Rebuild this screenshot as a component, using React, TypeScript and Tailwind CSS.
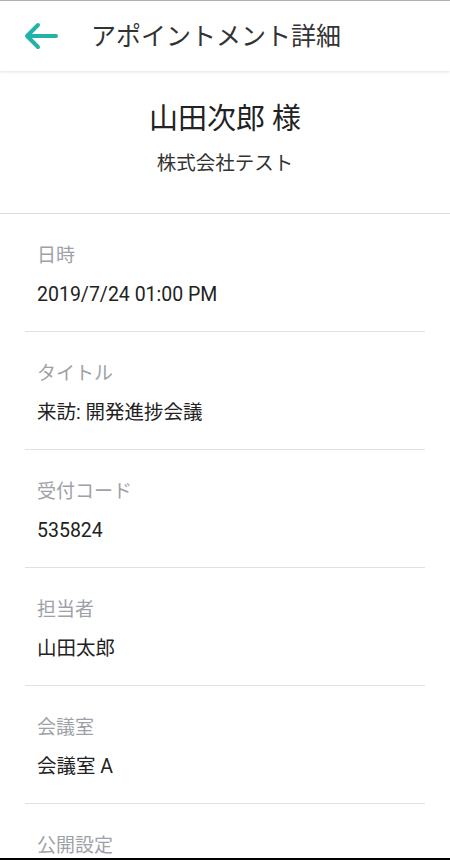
import React from "react";

const FONT = { fontFamily: 'Roboto, "Noto Sans CJK JP", sans-serif' };

const ITEMS: { label: string; value: string }[] = [
  { label: "日時", value: "2019/7/24 01:00 PM" },
  { label: "タイトル", value: "来訪: 開発進捗会議" },
  { label: "受付コード", value: "535824" },
  { label: "担当者", value: "山田太郎" },
  { label: "会議室", value: "会議室 A" },
  { label: "公開設定", value: "公開" },
];

function BackArrow() {
  return (
    <svg width="36" height="30" viewBox="0 0 36 30" fill="none">
      <path
        d="M4 15H33M15 4L4 15L15 26"
        stroke="#22b3a8"
        strokeWidth="4"
        strokeLinecap="round"
        strokeLinejoin="round"
      />
    </svg>
  );
}

export default function App() {
  return (
    <div className="relative h-[860px] w-[450px] overflow-hidden bg-white" style={FONT}>
      <div className="h-px bg-[#b5b5b5]" />
      <header className="relative z-10 flex h-[70px] items-center bg-white shadow-[0_1px_3px_rgba(0,0,0,0.12)]">
        <div className="ml-[23px] flex w-[40px] items-center">
          <BackArrow />
        </div>
        <h1 className="ml-[28px] text-[25px] leading-none text-[#333]">アポイントメント詳細</h1>
      </header>

      <section className="flex flex-col items-center border-b border-[#dcdcdc] pt-[30px] pb-[35px]">
        <div className="text-[29px] leading-[36px] text-[#222]">山田次郎 様</div>
        <div className="mt-[13px] text-[19.5px] leading-[28px] text-[#333]">株式会社テスト</div>
      </section>

      <div className="mx-[25px]">
        {ITEMS.map((item, i) => (
          <div key={`item-${i}`} className="border-b border-[#e0e0e0] px-3 pt-[28px] pb-[22px]">
            <div className="text-[19px] leading-[28px] text-[#9ea2a8]">{item.label}</div>
            <div className="mt-[11px] text-[19.5px] leading-[28px] text-[#222]">{item.value}</div>
          </div>
        ))}
      </div>

      <div className="absolute bottom-0 left-0 right-0 h-[2px] bg-black" />
    </div>
  );
}
